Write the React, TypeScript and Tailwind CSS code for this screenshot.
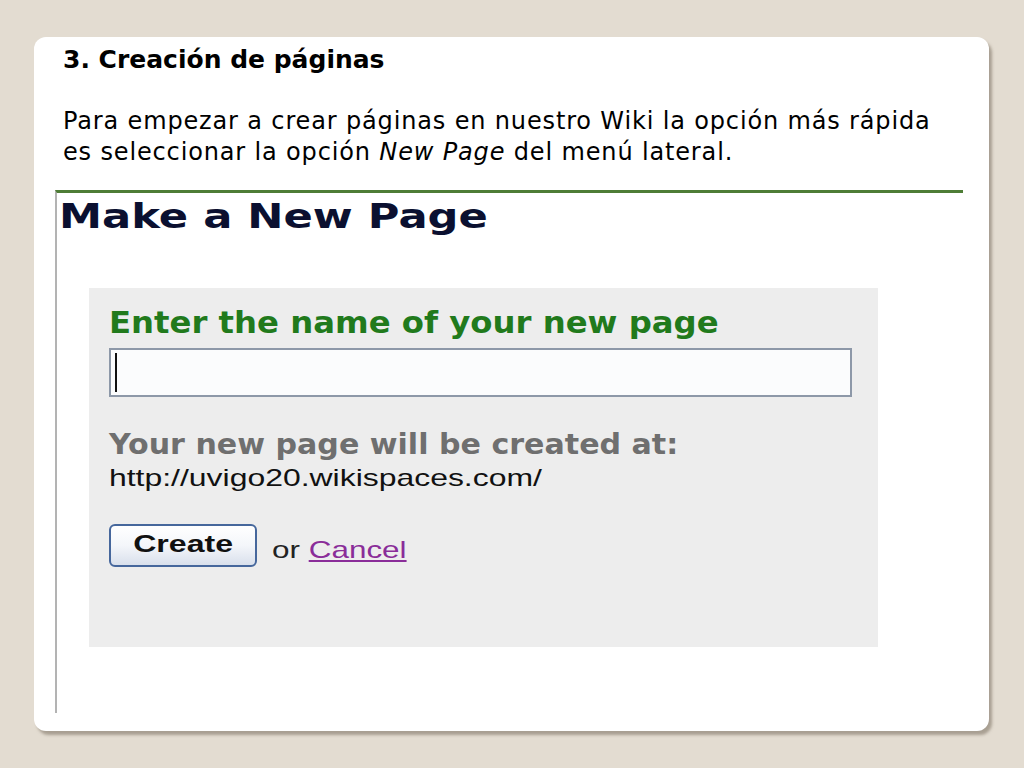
export default function App() {
  return (
    <div className="w-[1024px] h-[768px] bg-[#e3dcd1] pt-[37px] pl-[34px] overflow-hidden">
      <div className="w-[955px] h-[694px] bg-white rounded-[12px] shadow-[3px_4px_3px_rgba(120,110,95,0.55)] pt-[8px] pl-[29px] flex flex-col">
        {/* titulo */}
        <h1 className="font-['DejaVu_Sans',sans-serif] font-bold text-[25px] leading-[30px] text-black">
          3. Creación de páginas
        </h1>
        <p className="mt-[31px] font-['DejaVu_Sans',sans-serif] text-[24px] leading-[31px] tracking-[0.85px] text-black">
          Para empezar a crear páginas en nuestro Wiki la opción más rápida
          <br />
          es seleccionar la opción <i>New Page</i> del menú lateral.
        </p>

        {/* captura de wikispaces */}
        <div className="mt-[22px] -ml-[8px] w-[908px] h-[523px] border-t-[3px] border-t-[#4e7d36] border-l-2 border-l-[#b3b3b3] flex flex-col">
          <h2 className="pl-[2px] pt-[4px] font-['DejaVu_Sans',sans-serif] font-bold text-[33px] leading-[40px] text-[#0b1030]">
            <span className="inline-block origin-left scale-x-[1.31]">Make a New Page</span>
          </h2>
          <div className="mt-[51px] ml-[32px] w-[789px] h-[359px] bg-[#ededed] pl-[20px] pt-[16px] font-['DejaVu_Sans',sans-serif]">
            <div className="font-bold text-[29.5px] leading-[38px] text-[#217a1c]">
              <span className="inline-block origin-left scale-x-[1.095]">Enter the name of your new page</span>
            </div>
            <div className="mt-[6px] w-[743px] h-[49px] border-2 border-[#8d98a8] bg-[#fbfcfd] flex items-center pl-[4px]">
              <div className="w-[2px] h-[39px] bg-[#111]" />
            </div>
            <div className="mt-[30px] font-bold text-[27.5px] leading-[34px] text-[#6f6f6f]">
              <span className="inline-block origin-left scale-x-[1.094]">Your new page will be created at:</span>
            </div>
            <div className="mt-[1px] font-['Liberation_Sans',sans-serif] text-[24px] leading-[32px] text-[#111]">
              <span className="inline-block origin-left scale-x-[1.33]">http://uvigo20.wikispaces.com/</span>
            </div>
            <div className="mt-[30px] flex items-start gap-[15px] font-['Liberation_Sans',sans-serif]">
              <div className="w-[148px] h-[43px] rounded-[6px] border-2 border-[#46679c] bg-gradient-to-b from-[#ffffff] via-[#f4f6fa] to-[#d9e0ec] flex flex-col items-center pt-[4px] font-bold text-[24.5px] leading-[28px] text-[#111]">
                <span className="inline-block scale-x-[1.31]">Create</span>
              </div>
              <div className="mt-[10px] text-[24px] leading-[32px] text-[#222]">
                <span className="inline-block origin-left scale-x-[1.31]">
                  or <span className="text-[#8a2d99] underline">Cancel</span>
                </span>
              </div>
            </div>
          </div>
        </div>
      </div>
    </div>
  );
}
